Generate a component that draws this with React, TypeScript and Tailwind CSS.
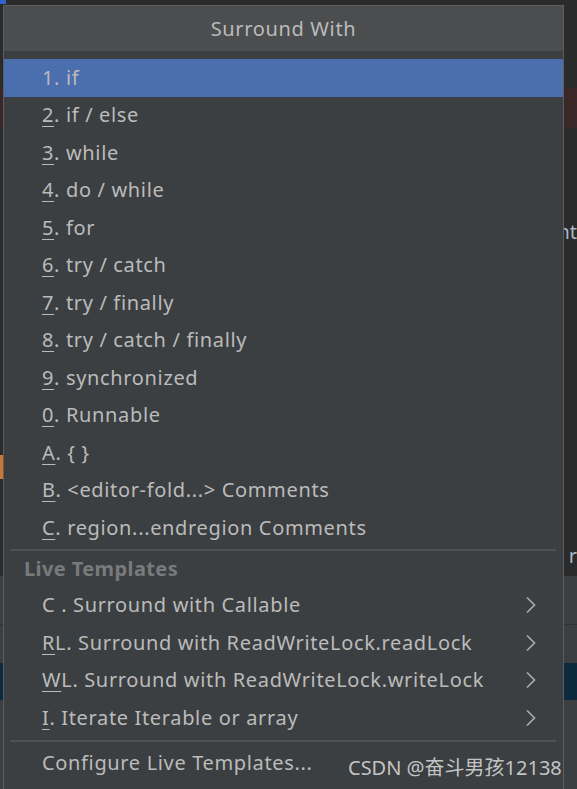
type Item = { key: string; rest: string; underline?: boolean; sub?: boolean };

const basicItems: Item[] = [
    { key: '1', rest: '. if', underline: false },
    { key: '2', rest: '. if / else' },
    { key: '3', rest: '. while' },
    { key: '4', rest: '. do / while' },
    { key: '5', rest: '. for' },
    { key: '6', rest: '. try / catch' },
    { key: '7', rest: '. try / finally' },
    { key: '8', rest: '. try / catch / finally' },
    { key: '9', rest: '. synchronized' },
    { key: '0', rest: '. Runnable' },
    { key: 'A', rest: '. { }' },
    { key: 'B', rest: '. <editor-fold...> Comments' },
    { key: 'C', rest: '. region...endregion Comments' },
];

const templateItems: Item[] = [
    { key: 'C', rest: ' . Surround with Callable', underline: false, sub: true },
    { key: 'R', rest: 'L. Surround with ReadWriteLock.readLock', sub: true },
    { key: 'W', rest: 'L. Surround with ReadWriteLock.writeLock', sub: true },
    { key: 'I', rest: '. Iterate Iterable or array', sub: true },
];

const Chevron = () => (
    <svg width="12" height="18" viewBox="0 0 12 18" className="shrink-0">
        <polyline points="2,1.5 9.5,9 2,16.5" fill="none" stroke="#a9acae" strokeWidth="1.7" />
    </svg>
);

const Row = ({ item, selected }: { item: Item; selected?: boolean }) => (
    <div
        className={`flex h-[37.5px] items-center pl-[38px] pr-[26px] ${selected ? 'bg-[#4b6eaf]' : ''}`}
    >
        <span className="flex-1 whitespace-pre">
            {item.underline === false ? (
                item.key
            ) : (
                <span className="underline decoration-1 underline-offset-[4px]">{item.key}</span>
            )}
            {item.rest}
        </span>
        {item.sub && <Chevron />}
    </div>
);

const Separator = ({ className }: { className: string }) => (
    <div className={`ml-[6px] mr-[7px] h-[2px] bg-[#4f5254] ${className}`} />
);

// editor lines behind the popup, only their edges show
const Editor = () => (
    <div className="flex h-full flex-col text-[20px] leading-[28px] text-[#a9b7c6]">
        <div className="flex h-[4px]">
            <div className="w-[6px] bg-[#2f65ca]" />
        </div>
        <div className="h-[84px]" />
        <div className="h-[40px] bg-[#3b2727]" />
        <div className="h-[90px]" />
        <div className="flex h-[28px] justify-end">nt</div>
        <div className="h-[209px]" />
        <div className="flex h-[24px]">
            <div className="w-[3px] bg-[#cc7832]" />
        </div>
        <div className="h-[63px]" />
        <div className="flex h-[28px] justify-end">r</div>
        <div className="h-[6px]" />
        <div className="h-[48px] bg-[#3c3f41]" />
        <div className="h-px bg-[#323232]" />
        <div className="h-[38px] bg-[#3c3f41]" />
        <div className="h-[37px] bg-[#0d293e]" />
        <div className="flex-1 bg-[#3c3f41]" />
    </div>
);

export default function App() {
    return (
        <div
            className="relative h-[789px] w-[577px] overflow-hidden bg-[#2b2b2b] text-[20px] text-[#bbbbbb]"
            style={{ fontFamily: '"Noto Sans", "Noto Sans CJK SC", sans-serif' }}
        >
            <Editor />
            <div className="absolute left-[3px] top-[5px] h-[800px] w-[561px] border border-[#5b5e61] bg-[#3c3f41] tracking-[0.65px]">
                <div className="flex h-[45px] items-center justify-center bg-[#4b4d4f] text-[#bbbbbb]">
                    Surround With
                </div>
                <div className="pt-[8px] leading-none">
                    {basicItems.map((item, i) => (
                        <Row key={`b-${i}`} item={item} selected={i === 0} />
                    ))}
                    <Separator className="mt-[2px]" />
                    <div className="flex h-[36px] items-center pl-[20px] font-bold tracking-[0.4px] text-[#787a7c]">
                        Live Templates
                    </div>
                    {templateItems.map((item, i) => (
                        <Row key={`t-${i}`} item={item} />
                    ))}
                    <Separator className="mt-[3px]" />
                    <div className="mt-[3px] flex h-[37.5px] items-center pl-[38px]">Configure Live Templates...</div>
                </div>
            </div>
            <div className="absolute left-[348px] top-[754px] whitespace-nowrap text-[20px] leading-[28px] text-[#d6d6d6]/90">
                CSDN @奋斗男孩12138
            </div>
        </div>
    );
}
